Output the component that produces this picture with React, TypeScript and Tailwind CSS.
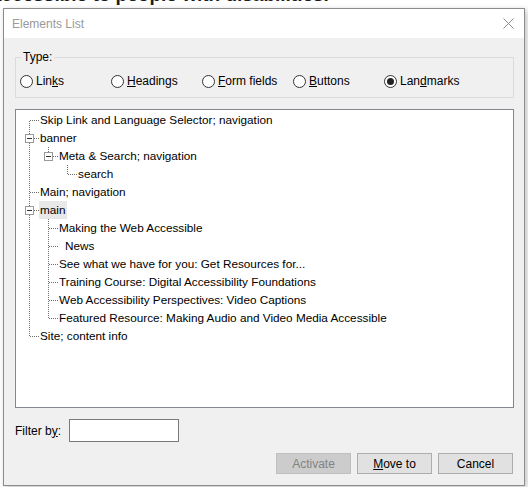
import React from 'react';

type Seg = 'pass' | 'blank' | 'mid' | 'last' | 'first';

type Row = {
	guides: Seg[];
	text: string;
	open?: boolean;
	selected?: boolean;
	indent?: boolean;
};

const rows: Row[] = [
	{ guides: ['first'], text: 'Skip Link and Language Selector; navigation' },
	{ guides: ['mid'], text: 'banner', open: true },
	{ guides: ['pass', 'last'], text: 'Meta & Search; navigation', open: true },
	{ guides: ['pass', 'blank', 'last'], text: 'search' },
	{ guides: ['mid'], text: 'Main; navigation' },
	{ guides: ['mid'], text: 'main', open: true, selected: true },
	{ guides: ['pass', 'mid'], text: 'Making the Web Accessible' },
	{ guides: ['pass', 'mid'], text: 'News', indent: true },
	{ guides: ['pass', 'mid'], text: 'See what we have for you: Get Resources for...' },
	{ guides: ['pass', 'mid'], text: 'Training Course: Digital Accessibility Foundations' },
	{ guides: ['pass', 'mid'], text: 'Web Accessibility Perspectives: Video Captions' },
	{ guides: ['pass', 'last'], text: 'Featured Resource: Making Audio and Video Media Accessible' },
	{ guides: ['last'], text: 'Site; content info' },
];

const DOT = '#6f6f6f';

// one 19x18 cell of the tree's dotted guide lines
const Guide = ({ kind, open }: { kind: Seg; open?: boolean }) => {
	const up = kind === 'pass' || kind === 'mid' || kind === 'last';
	const down = kind === 'pass' || kind === 'mid' || kind === 'first';
	const branch = kind === 'mid' || kind === 'last' || kind === 'first';
	return (
		<svg width="19" height="18" className="shrink-0">
			{kind === 'pass' && (
				<line x1="9.5" x2="9.5" y1="0" y2="18" stroke={DOT} strokeDasharray="1 1" />
			)}
			{kind !== 'pass' && up && (
				<line x1="9.5" x2="9.5" y1="0" y2={open ? 5 : 9} stroke={DOT} strokeDasharray="1 1" />
			)}
			{kind !== 'pass' && down && (
				<line x1="9.5" x2="9.5" y1={open ? 14 : 10} y2="18" stroke={DOT} strokeDasharray="1 1" />
			)}
			{branch && (
				<line x1={open ? 14 : 10} x2="19" y1="9.5" y2="9.5" stroke={DOT} strokeDasharray="1 1" />
			)}
			{open && (
				<>
					<rect x="5.5" y="5.5" width="8" height="8" fill="#fff" stroke="#9a9a9a" />
					<line x1="7" x2="12" y1="9.5" y2="9.5" stroke="#333" />
				</>
			)}
		</svg>
	);
};

const Radio = ({ label, checked }: { label: React.ReactNode; checked?: boolean }) => {
	return (
		<div className="w-[91px] flex items-center gap-[3px]">
			<span className="w-[13px] h-[13px] rounded-full border border-[#333] bg-white flex items-center justify-center shrink-0">
				{checked && <span className="w-[7px] h-[7px] rounded-full bg-[#222]" />}
			</span>
			<span>{label}</span>
		</div>
	);
};

const App = () => {
	return (
		<div className="relative h-[487px] w-[528px] overflow-hidden bg-white font-['Liberation_Sans',Arial,sans-serif] text-[12px] text-black">
			<p className="-mt-[15px] -ml-[9px] text-[19px] leading-[20px] font-bold text-[#1b1b1b] whitespace-nowrap">
				accessible to people with disabilities.
			</p>

			<div className="absolute left-[3px] top-[8px] w-[522px] border border-[#8c8c8c] bg-[#f0f0f0] shadow-[2px_2px_6px_rgba(0,0,0,0.25)]">
				<div className="h-[29px] bg-white flex items-center justify-between pl-[8px] pr-[10px]">
					<span className="text-[#999] leading-[16px]">Elements List</span>
					<svg width="11" height="11" viewBox="0 0 11 11">
						<path d="M0.5 0.5 L10.5 10.5 M10.5 0.5 L0.5 10.5" stroke="#8a8a8a" strokeWidth="1" />
					</svg>
				</div>

				<div className="flex flex-col pl-[11px] pr-[10px] pt-[11px] pb-[11px]">
					<fieldset className="border border-[#dcdcdc] pl-[4px] pt-[6px] pb-[6px]">
						<legend className="ml-[1px] px-[2px] leading-[16px]">Type:</legend>
						<div className="h-[20px] flex items-center">
							<Radio label={<>Lin<u>k</u>s</>} />
							<Radio label={<><u>H</u>eadings</>} />
							<Radio label={<><u>F</u>orm fields</>} />
							<Radio label={<><u>B</u>uttons</>} />
							<Radio label={<>Lan<u>d</u>marks</>} checked />
						</div>
					</fieldset>

					<div className="mt-[11px] h-[299px] border border-[#828790] bg-white pt-[1px] pl-[4px] text-[11.75px]">
						{rows.map((r, i) => (
							<div key={i} className="h-[18px] flex items-center">
								{r.guides.map((g, j) => (
									<Guide key={j} kind={g} open={j === r.guides.length - 1 ? r.open : false} />
								))}
								<span
									className={`leading-[18px] pl-px pr-[2px] whitespace-nowrap ${r.selected ? 'bg-[#e8e8e8]' : ''} ${r.indent ? 'ml-[6px]' : ''}`}
								>
									{r.text}
								</span>
							</div>
						))}
					</div>

					<div className="mt-[11px] h-[23px] flex items-center">
						<span className="w-[54px]">
							Filter b<u>y</u>:
						</span>
						<input className="w-[110px] h-[23px] border border-[#7a7a7a] bg-white outline-none px-1" />
					</div>

					<div className="mt-[11px] flex justify-end gap-[6px] pr-px">
						<button className="w-[75px] h-[21px] border border-[#bfbfbf] bg-[#cccccc] text-[#838383]">
							Activate
						</button>
						<button className="w-[75px] h-[21px] border border-[#adadad] bg-[#e1e1e1]">
							<u>M</u>ove to
						</button>
						<button className="w-[75px] h-[21px] border border-[#adadad] bg-[#e1e1e1]">
							Cancel
						</button>
					</div>
				</div>
			</div>
		</div>
	);
};

export default App;
